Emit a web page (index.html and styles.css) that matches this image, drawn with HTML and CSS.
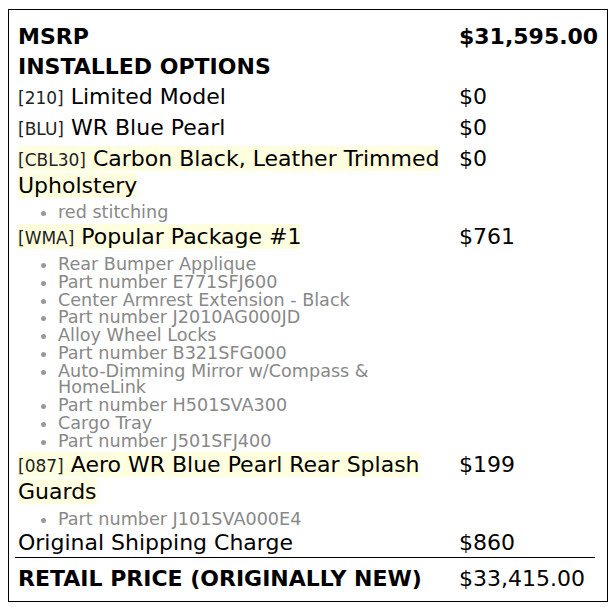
FILE: index.html
```html
<!DOCTYPE html>
<html>
<head>
<meta charset="utf-8">
<link rel="stylesheet" href="styles.css">
</head>
<body>
<div class="sticker">
  <table class="items">
    <colgroup><col class="c-name"><col class="c-price"></colgroup>
    <tr class="head"><td>MSRP</td><td>$31,595.00</td></tr>
    <tr class="head"><td>INSTALLED OPTIONS</td><td></td></tr>
    <tr><td><span class="code">[210]</span> Limited Model</td><td>$0</td></tr>
    <tr><td><span class="code">[BLU]</span> WR Blue Pearl</td><td>$0</td></tr>
    <tr><td><span class="hl"><span class="code">[CBL30]</span> Carbon Black, Leather Trimmed Upholstery</span></td><td>$0</td></tr>
    <tr class="sub"><td><ul><li>red stitching</li></ul></td><td></td></tr>
    <tr><td><span class="hl"><span class="code">[WMA]</span> Popular Package #1</span></td><td>$761</td></tr>
    <tr class="sub"><td><ul>
      <li>Rear Bumper Applique</li>
      <li>Part number E771SFJ600</li>
      <li>Center Armrest Extension - Black</li>
      <li>Part number J2010AG000JD</li>
      <li>Alloy Wheel Locks</li>
      <li>Part number B321SFG000</li>
      <li>Auto-Dimming Mirror w/Compass &amp; HomeLink</li>
      <li>Part number H501SVA300</li>
      <li>Cargo Tray</li>
      <li>Part number J501SFJ400</li>
    </ul></td><td></td></tr>
    <tr><td><span class="hl"><span class="code">[087]</span> Aero WR Blue Pearl Rear Splash Guards</span></td><td>$199</td></tr>
    <tr class="sub"><td><ul><li>Part number J101SVA000E4</li></ul></td><td></td></tr>
    <tr><td>Original Shipping Charge</td><td>$860</td></tr>
  </table>
  <div class="total">
    <div class="total-label">RETAIL PRICE (ORIGINALLY NEW)</div>
    <div class="total-price">$33,415.00</div>
  </div>
</div>
</body>
</html>
```
FILE: styles.css
```css
html, body {
  background: #fff;
}
body {
  margin: 8px;
  font-family: "DejaVu Sans", sans-serif;
  color: #000;
}
.sticker {
  margin-top: 1px;
  border: 1px solid #000;
  padding: 11px 11px 9px 6px;
  font-size: 22px;
  line-height: 26px;
}
.items {
  width: 580px;
  table-layout: fixed;
  border-collapse: separate;
  border-spacing: 2px;
}
.c-name { width: 439px; }
.c-price { width: 135px; }
.items td {
  padding: 1px;
  vertical-align: top;
}
.head td {
  font-weight: bold;
}
.code {
  font-size: 17px;
  color: #222;
}
.hl {
  background: #ffffe0;
}
.sub td {
  padding: 1px 1px 0 1px;
}
.sub ul {
  margin: 0;
  padding: 0 0 0 40px;
  color: #888;
  font-size: 17.6px;
  line-height: 16.5px;
}
.sub li {
  margin-top: 1.3px;
}
.sub li::marker {
  color: #999;
}
.total {
  margin-top: -2px;
  border-top: 1px solid #000;
  width: 580px;
  padding: 8px 0 0 3px;
  box-sizing: border-box;
  display: grid;
  grid-template-columns: 441px 1fr;
}
.total-label {
  font-weight: bold;
}
```
